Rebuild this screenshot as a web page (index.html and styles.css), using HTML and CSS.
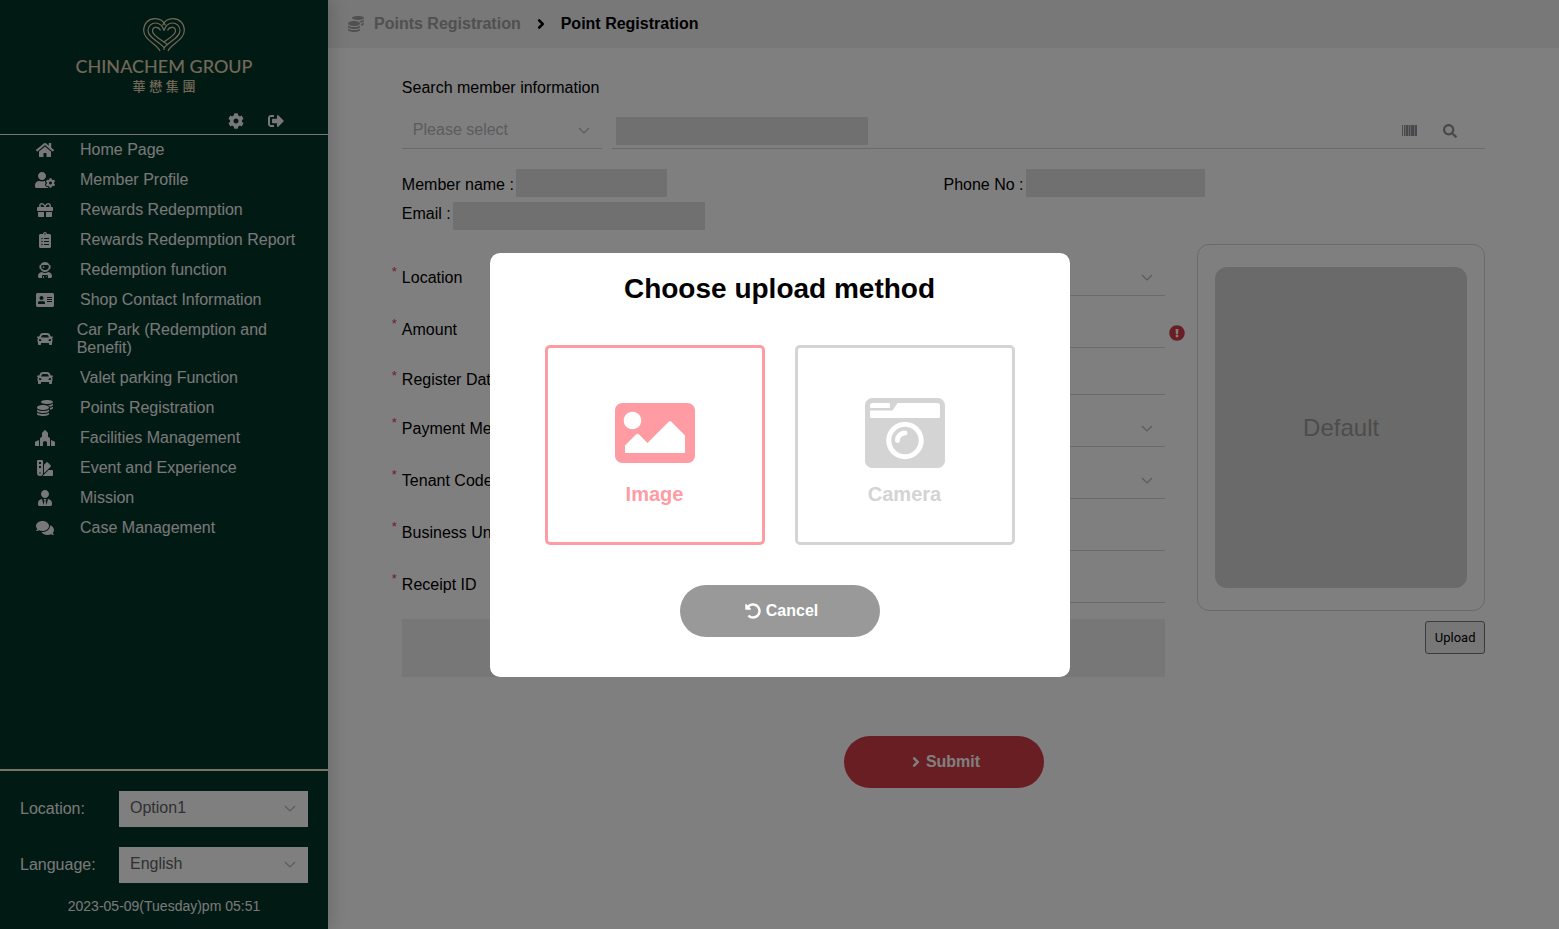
FILE: index.html
```html
<!DOCTYPE html>
<html lang="en">
<head>
<meta charset="utf-8">
<title>Point Registration</title>
<link rel="stylesheet" href="styles.css">
</head>
<body>
<svg class="defs" aria-hidden="true">
  <symbol id="coins" viewBox="0 0 512 512"><path d="M0 405.3V448c0 35.3 86 64 192 64s192-28.7 192-64v-42.7C342.7 434.4 267.2 448 192 448S41.3 434.4 0 405.3zM320 128c106 0 192-28.7 192-64S426 0 320 0 128 28.7 128 64s86 64 192 64zM0 300.4V352c0 35.3 86 64 192 64s192-28.7 192-64v-51.6c-41.3 34-116.9 51.6-192 51.6S41.3 334.4 0 300.4zm416 11c57.3-11.1 96-31.7 96-55.4v-42.7c-23.2 16.4-57.3 27.6-96 34.5v63.6zM192 160C86 160 0 195.8 0 240s86 80 192 80 192-35.8 192-80-86-80-192-80zm219.3 56.3c60-10.8 100.7-32 100.7-56.3v-42.7c-35.5 25.1-96.5 38.6-160.7 41.8 29.5 14.3 51.2 33.5 60 57.2z"/></symbol>
  <symbol id="car" viewBox="0 0 512 512"><path d="M499.99 176h-59.87l-16.64-41.6C406.38 91.63 365.57 64 319.5 64h-127c-46.06 0-86.88 27.63-103.99 70.4L71.87 176H12.01C4.2 176-1.53 183.34.37 190.91l6 24C7.7 220.25 12.5 224 18.01 224h20.07C24.65 235.73 16 252.78 16 272v48c0 16.12 6.16 30.67 16 41.93V416c0 17.67 14.33 32 32 32h32c17.67 0 32-14.33 32-32v-32h256v32c0 17.67 14.33 32 32 32h32c17.67 0 32-14.33 32-32v-54.07c9.84-11.25 16-25.8 16-41.93v-48c0-19.22-8.65-36.27-22.07-48H494c5.51 0 10.31-3.75 11.64-9.09l6-24c1.89-7.57-3.84-14.91-11.65-14.91zm-352.06-17.83c7.29-18.22 24.94-30.17 44.57-30.17h127c19.63 0 37.28 11.95 44.57 30.17L384 208H128l19.93-49.83zM96 319.8c-19.2 0-32-12.76-32-31.9S76.8 256 96 256s48 28.71 48 47.85-28.8 15.95-48 15.95zm320 0c-19.2 0-48 3.19-48-15.95S396.8 256 416 256s32 12.76 32 31.9-12.8 31.9-32 31.9z"/></symbol>
  <symbol id="angle" viewBox="0 0 256 512"><path d="M224.3 273l-136 136c-9.4 9.4-24.6 9.4-33.9 0l-22.6-22.6c-9.4-9.4-9.4-24.6 0-33.9l96.4-96.4-96.4-96.4c-9.4-9.4-9.4-24.6 0-33.9L54.3 103c9.4-9.4 24.6-9.4 33.9 0l136 136c9.5 9.4 9.5 24.6.1 34z"/></symbol>
  <symbol id="chevron" viewBox="0 0 14 14"><path d="M2 4l5 5 5-5" fill="none" stroke="currentColor" stroke-width="1.1"/></symbol>
</svg>

<div class="layout">
  <aside class="sidebar">
    <header class="brand">
      <svg class="brand-mark" viewBox="0 0 42 34" aria-hidden="true">
        <g fill="none" stroke="currentColor" stroke-width="1.2">
          <path d="M17 33C14 26 .7 22 .7 12.500C.7 5 6 .7 12 .7C17 .7 20.500 3 22.500 7.500"/>
          <path d="M25 33C28 26 41.300 22 41.300 12.500C41.300 5 36 .7 30 .7C25 .7 21.500 3 19.500 7.500"/>
          <path d="M21 32V29.500C17 24 5 20 5 12.500C5 8 8.500 5 12.500 5C17 5 19.500 8 21 12.500"/>
          <path d="M21 30C25 24 37 20 37 12.500C37 8 33.500 5 29.500 5C25 5 22.500 8 21 12.500"/>
          <path d="M25 27C18 21 9.500 18 9.500 13C9.500 8.500 15.500 8 17.500 12.500"/>
          <path d="M21 24C26 20 32.500 17 32.500 13C32.500 8.500 26.500 8 24.500 12.500"/>
        </g>
      </svg>
      <p class="brand-name">CHINACHEM GROUP</p>
      <p class="brand-cjk" lang="zh-Hant">華 懋 集 團</p>
      <div class="brand-tools">
        <button class="icon-button" aria-label="Settings"><svg class="icon" viewBox="0 0 512 512"><path d="M487.4 315.7l-42.6-24.6c4.300-23.200 4.300-47 0-70.200l42.600-24.600c4.900-2.800 7.100-8.600 5.500-14-11.100-35.600-30-67.800-54.700-94.600-3.800-4.100-10-5.100-14.800-2.300L380.800 110c-17.900-15.400-38.500-27.300-60.800-35.100V25.800c0-5.600-3.900-10.500-9.400-11.700-36.700-8.200-74.300-7.800-109.200 0-5.500 1.200-9.400 6.100-9.400 11.700V75c-22.200 7.900-42.800 19.800-60.800 35.100L88.700 85.500c-4.900-2.800-11-1.900-14.800 2.300-24.700 26.700-43.600 58.900-54.700 94.600-1.700 5.400.6 11.200 5.500 14L67.300 221c-4.300 23.200-4.300 47 0 70.200l-42.600 24.600c-4.900 2.800-7.100 8.600-5.500 14 11.100 35.600 30 67.800 54.700 94.600 3.800 4.100 10 5.100 14.800 2.300l42.600-24.600c17.900 15.400 38.500 27.300 60.800 35.100v49.200c0 5.600 3.900 10.500 9.400 11.700 36.700 8.200 74.300 7.800 109.200 0 5.500-1.200 9.400-6.100 9.400-11.700v-49.200c22.200-7.900 42.800-19.800 60.800-35.100l42.600 24.600c4.900 2.800 11 1.900 14.800-2.300 24.700-26.700 43.600-58.900 54.700-94.600 1.500-5.500-.7-11.300-5.600-14.100zM256 336c-44.100 0-80-35.900-80-80s35.900-80 80-80 80 35.900 80 80-35.900 80-80 80z"/></svg></button>
        <button class="icon-button" aria-label="Sign out"><svg class="icon" viewBox="0 0 512 512"><path d="M497 273L329 441c-15 15-41 4.500-41-17v-96H152c-13.300 0-24-10.700-24-24v-96c0-13.300 10.700-24 24-24h136V88c0-21.400 25.900-32 41-17l168 168c9.300 9.400 9.300 24.600 0 34zM192 436v-40c0-6.600-5.400-12-12-12H96c-17.700 0-32-14.300-32-32V160c0-17.700 14.300-32 32-32h84c6.600 0 12-5.400 12-12V76c0-6.600-5.400-12-12-12H96c-53 0-96 43-96 96v192c0 53 43 96 96 96h84c6.600 0 12-5.400 12-12z"/></svg></button>
      </div>
    </header>

    <nav class="menu">
      <a class="menu-item" href="#"><span class="menu-icon"><svg class="icon" viewBox="0 0 576 512"><path d="M280.37 148.26L96 300.11V464a16 16 0 0 0 16 16l112.06-.29a16 16 0 0 0 15.92-16V368a16 16 0 0 1 16-16h64a16 16 0 0 1 16 16v95.64a16 16 0 0 0 16 16.05L464 480a16 16 0 0 0 16-16V300L295.67 148.26a12.19 12.19 0 0 0-15.3 0zM571.6 251.47L488 182.56V44.05a12 12 0 0 0-12-12h-56a12 12 0 0 0-12 12v72.61L318.47 43a48 48 0 0 0-61 0L4.34 251.47a12 12 0 0 0-1.6 16.9l25.5 31A12 12 0 0 0 45.15 301l235.22-193.74a12.19 12.19 0 0 1 15.3 0L530.9 301a12 12 0 0 0 16.9-1.6l25.5-31a12 12 0 0 0-1.7-16.93z"/></svg></span><span>Home Page</span></a>
      <a class="menu-item" href="#"><span class="menu-icon"><svg class="icon" viewBox="0 0 640 512"><path d="M610.5 373.3c2.600-14.100 2.600-28.500 0-42.600l25.800-14.900c3-1.700 4.300-5.200 3.300-8.500-6.700-21.600-18.200-41.200-33.200-57.400-2.300-2.500-6-3.100-9-1.400l-25.800 14.900c-10.900-9.300-23.400-16.500-36.900-21.300v-29.800c0-3.400-2.400-6.400-5.700-7.100-22.300-5-45-4.800-66.200 0-3.300.7-5.700 3.700-5.700 7.100v29.800c-13.500 4.800-26 12-36.900 21.300l-25.800-14.900c-2.900-1.700-6.700-1.100-9 1.400-15 16.200-26.500 35.800-33.200 57.400-1 3.300.4 6.800 3.300 8.500l25.800 14.900c-2.600 14.100-2.600 28.500 0 42.600l-25.800 14.900c-3 1.700-4.300 5.200-3.300 8.500 6.700 21.600 18.200 41.100 33.200 57.400 2.300 2.500 6 3.100 9 1.400l25.800-14.900c10.900 9.300 23.400 16.500 36.900 21.300v29.800c0 3.400 2.400 6.400 5.700 7.100 22.300 5 45 4.800 66.200 0 3.300-.7 5.700-3.700 5.700-7.100v-29.800c13.500-4.800 26-12 36.900-21.300l25.800 14.900c2.900 1.700 6.700 1.100 9-1.400 15-16.200 26.500-35.800 33.200-57.400 1-3.300-.4-6.800-3.300-8.500l-25.800-14.900zM496 400.500c-26.800 0-48.500-21.800-48.500-48.500s21.800-48.500 48.500-48.500 48.500 21.800 48.500 48.500-21.700 48.500-48.500 48.500zM224 256c70.700 0 128-57.300 128-128S294.700 0 224 0 96 57.300 96 128s57.300 128 128 128zm201.200 226.500c-2.300-1.200-4.600-2.600-6.800-3.900l-7.900 4.600c-6 3.400-12.800 5.300-19.600 5.300-10.900 0-21.400-4.600-28.900-12.600-18.300-19.800-32.300-43.900-40.200-69.600-5.500-17.700 1.900-36.400 17.900-45.700l7.900-4.600c-.1-2.600-.1-5.200 0-7.800l-7.900-4.600c-16-9.200-23.400-28-17.900-45.700.9-2.900 2.200-5.800 3.200-8.700-3.800-.3-7.500-1.200-11.400-1.200h-16.700c-22.200 10.200-46.900 16-72.900 16s-50.600-5.800-72.900-16h-16.700C60.200 288 0 348.200 0 422.400V464c0 26.500 21.500 48 48 48h352c10.100 0 19.500-3.200 27.200-8.500-1.200-3.800-2-7.700-2-11.800v-9.200z"/></svg></span><span>Member Profile</span></a>
      <a class="menu-item" href="#"><span class="menu-icon"><svg class="icon" viewBox="0 0 512 512"><path d="M32 448c0 17.700 14.300 32 32 32h160V320H32v128zm256 32h160c17.700 0 32-14.300 32-32V320H288v160zm192-320h-42.100c6.200-12.100 10.100-25.500 10.100-40 0-48.500-39.500-88-88-88-41.600 0-68.500 21.300-103 68.300-34.500-47-61.400-68.300-103-68.300-48.500 0-88 39.500-88 88 0 14.500 3.800 27.900 10.100 40H32c-17.700 0-32 14.300-32 32v80c0 8.800 7.200 16 16 16h480c8.800 0 16-7.200 16-16v-80c0-17.700-14.300-32-32-32zm-326.100 0c-22.100 0-40-17.900-40-40s17.900-40 40-40c19.900 0 34.600 3.300 86.100 80h-86.100zm206.100 0h-86.100c51.400-76.500 65.700-80 86.100-80 22.100 0 40 17.900 40 40s-17.900 40-40 40z"/></svg></span><span>Rewards Redepmption</span></a>
      <a class="menu-item" href="#"><span class="menu-icon"><svg class="icon" viewBox="0 0 384 512"><path d="M336 64h-80c0-35.300-28.700-64-64-64s-64 28.700-64 64H48C21.500 64 0 85.500 0 112v352c0 26.500 21.500 48 48 48h288c26.500 0 48-21.500 48-48V112c0-26.500-21.500-48-48-48zM96 424c-13.300 0-24-10.700-24-24s10.700-24 24-24 24 10.700 24 24-10.700 24-24 24zm0-96c-13.300 0-24-10.700-24-24s10.700-24 24-24 24 10.700 24 24-10.700 24-24 24zm0-96c-13.300 0-24-10.700-24-24s10.700-24 24-24 24 10.700 24 24-10.700 24-24 24zm96-192c13.300 0 24 10.700 24 24s-10.700 24-24 24-24-10.700-24-24 10.700-24 24-24zm128 368c0 4.400-3.600 8-8 8H168c-4.400 0-8-3.600-8-8v-16c0-4.400 3.600-8 8-8h144c4.400 0 8 3.600 8 8v16zm0-96c0 4.400-3.600 8-8 8H168c-4.400 0-8-3.600-8-8v-16c0-4.400 3.600-8 8-8h144c4.400 0 8 3.600 8 8v16zm0-96c0 4.400-3.600 8-8 8H168c-4.400 0-8-3.600-8-8v-16c0-4.400 3.600-8 8-8h144c4.400 0 8 3.600 8 8v16z"/></svg></span><span>Rewards Redepmption Report</span></a>
      <a class="menu-item" href="#"><span class="menu-icon"><svg class="icon" viewBox="0 0 448 512"><path d="M64 224h13.500c24.700 56.500 80.900 96 146.500 96s121.800-39.500 146.500-96H384c8.800 0 16-7.200 16-16v-96c0-8.800-7.200-16-16-16h-13.500C345.800 39.500 289.600 0 224 0S102.200 39.500 77.500 96H64c-8.800 0-16 7.200-16 16v96c0 8.800 7.200 16 16 16zm40-88c0-22.100 21.500-40 48-40h144c26.500 0 48 17.900 48 40v24c0 53-43 96-96 96h-48c-53 0-96-43-96-96v-24zm72 72l12-36 36-12-36-12-12-36-12 36-36 12 36 12 12 36zm151.600 113.400C297.700 340.700 262.200 352 224 352s-73.700-11.300-103.600-30.600C52.900 328.500 0 385 0 454.400v9.600c0 26.500 21.500 48 48 48h80v-64c0-17.700 14.300-32 32-32h128c17.700 0 32 14.300 32 32v64h80c26.500 0 48-21.500 48-48v-9.600c0-69.400-52.900-125.900-120.400-133zM272 448c-8.800 0-16 7.200-16 16s7.200 16 16 16 16-7.200 16-16-7.200-16-16-16zm-96 0c-8.800 0-16 7.200-16 16v48h32v-48c0-8.800-7.200-16-16-16z"/></svg></span><span>Redemption function</span></a>
      <a class="menu-item" href="#"><span class="menu-icon"><svg class="icon" viewBox="0 0 576 512"><path d="M528 32H48C21.500 32 0 53.500 0 80v352c0 26.500 21.500 48 48 48h480c26.500 0 48-21.500 48-48V80c0-26.500-21.500-48-48-48zm-352 96c35.300 0 64 28.700 64 64s-28.700 64-64 64-64-28.700-64-64 28.700-64 64-64zm112 236.800c0 10.600-10 19.200-22.400 19.200H86.400C74 384 64 375.400 64 364.800v-19.200c0-31.800 30.100-57.600 67.200-57.600h5c12.300 5.100 25.700 8 39.800 8s27.600-2.900 39.800-8h5c37.100 0 67.200 25.800 67.200 57.600v19.200zM512 312c0 4.400-3.600 8-8 8H360c-4.400 0-8-3.600-8-8v-16c0-4.400 3.600-8 8-8h144c4.400 0 8 3.600 8 8v16zm0-64c0 4.400-3.600 8-8 8H360c-4.400 0-8-3.600-8-8v-16c0-4.400 3.600-8 8-8h144c4.400 0 8 3.600 8 8v16zm0-64c0 4.400-3.600 8-8 8H360c-4.400 0-8-3.600-8-8v-16c0-4.400 3.600-8 8-8h144c4.400 0 8 3.600 8 8v16z"/></svg></span><span>Shop Contact Information</span></a>
      <a class="menu-item" href="#"><span class="menu-icon"><svg class="icon"><use href="#car"/></svg></span><span>Car Park (Redemption and Benefit)</span></a>
      <a class="menu-item" href="#"><span class="menu-icon"><svg class="icon"><use href="#car"/></svg></span><span>Valet parking Function</span></a>
      <a class="menu-item" href="#"><span class="menu-icon"><svg class="icon"><use href="#coins"/></svg></span><span>Points Registration</span></a>
      <a class="menu-item" href="#"><span class="menu-icon"><svg class="icon" viewBox="0 0 640 512"><path d="M620.610 366.550L512 320v192h112c8.840 0 16-7.160 16-16V395.960a32 32 0 0 0-19.390-29.410zM0 395.960V496c0 8.840 7.160 16 16 16h112V320L19.390 366.550A32 32 0 0 0 0 395.960zm464.460-149.280L416 217.600V102.630c0-8.490-3.370-16.620-9.380-22.630L331.310 4.690c-6.250-6.250-16.380-6.250-22.620 0L233.380 80c-6 6-9.380 14.140-9.380 22.630V217.600l-48.460 29.080A31.997 31.997 0 0 0 160 274.120V512h96v-96c0-35.350 28.660-64 64-64s64 28.650 64 64v96h96V274.120c0-11.240-5.900-21.660-15.540-27.440z"/></svg></span><span>Facilities Management</span></a>
      <a class="menu-item" href="#"><span class="menu-icon"><svg class="icon" viewBox="0 0 512 512"><path d="M434.66 167.71L344.5 77.36a31.83 31.83 0 0 0-45-.07l-.07.07L224 152.88V424L434.66 212.9a32 32 0 0 0 0-45.19zM480 320H373.09L186.68 506.51c-2.06 2.07-4.5 3.58-6.68 5.49H480a32 32 0 0 0 32-32V352a32 32 0 0 0-32-32zM192 32a32 32 0 0 0-32-32H32A32 32 0 0 0 0 32v384a96 96 0 0 0 192 0zM96 440a24 24 0 1 1 24-24 24 24 0 0 1-24 24zm32-184H64v-64h64zm0-128H64V64h64z"/></svg></span><span>Event and Experience</span></a>
      <a class="menu-item" href="#"><span class="menu-icon"><svg class="icon" viewBox="0 0 448 512"><path d="M224 256c70.700 0 128-57.300 128-128S294.700 0 224 0 96 57.300 96 128s57.300 128 128 128zm95.800 32.600L272 480l-32-136 32-56h-96l32 56-32 136-47.800-191.400C56.900 292 0 350.300 0 422.400V464c0 26.500 21.500 48 48 48h352c26.500 0 48-21.500 48-48v-41.600c0-72.100-56.900-130.400-128.200-133.800z"/></svg></span><span>Mission</span></a>
      <a class="menu-item" href="#"><span class="menu-icon"><svg class="icon" viewBox="0 0 576 512"><path d="M416 192c0-88.400-93.100-160-208-160S0 103.600 0 192c0 34.300 14.100 65.900 38 92-13.400 30.200-35.500 54.200-35.800 54.500-2.200 2.300-2.800 5.700-1.500 8.700S4.800 352 8 352c36.600 0 66.900-12.300 88.700-25 32.200 15.700 70.300 25 111.300 25 114.900 0 208-71.600 208-160zm122 220c23.900-26 38-57.700 38-92 0-66.900-53.500-124.200-129.300-148.100.9 6.600 1.300 13.300 1.300 20.100 0 105.900-107.700 192-240 192-10.800 0-21.300-.8-31.700-1.900C207.800 439.600 281.800 480 368 480c41 0 79.100-9.200 111.300-25 21.800 12.700 52.100 25 88.700 25 3.200 0 6.100-1.900 7.300-4.800 1.300-2.900.7-6.300-1.500-8.700-.3-.3-22.400-24.200-35.800-54.500z"/></svg></span><span>Case Management</span></a>
    </nav>

    <footer class="preferences">
      <div class="preference">
        <label for="site">Location:</label>
        <span class="picker picker-filled"><select id="site"><option>Option1</option></select><svg class="chevron"><use href="#chevron"/></svg></span>
      </div>
      <div class="preference">
        <label for="language">Language:</label>
        <span class="picker picker-filled"><select id="language"><option>English</option></select><svg class="chevron"><use href="#chevron"/></svg></span>
      </div>
      <p class="clock">2023-05-09(Tuesday)pm 05:51</p>
    </footer>
  </aside>

  <main class="page">
    <nav class="breadcrumb">
      <a class="crumb" href="#"><svg class="icon"><use href="#coins"/></svg>Points Registration</a>
      <svg class="icon angle"><use href="#angle"/></svg>
      <span>Point Registration</span>
    </nav>

    <div class="content">
      <label class="search-label" for="search-type">Search member information</label>
      <div class="search">
        <span class="picker search-type"><select class="placeholder" id="search-type"><option>Please select</option></select><svg class="chevron"><use href="#chevron"/></svg></span>
        <div class="search-box">
          <input class="search-input" type="text" aria-label="Search value">
          <button class="icon-button" aria-label="Scan barcode"><svg class="icon" viewBox="0 0 16 16" shape-rendering="crispEdges"><path d="M0 2h1v11H0zM2 2h1v11H2zM4 2h2v11H4zM7 2h1v11H7zM9 2h3v11H9zM13 2h2v11h-2z"/><path d="M3 2h1v11H3zM6 2h1v11H6zM8 2h1v11H8zM12 2h1v11h-1z" opacity=".5"/></svg></button>
          <button class="icon-button" aria-label="Search"><svg class="icon icon-search" viewBox="0 0 512 512"><path d="M505 442.700L405.300 343c-4.500-4.500-10.600-7-17-7H372c27.600-35.300 44-79.700 44-128C416 93.100 322.900 0 208 0S0 93.100 0 208s93.100 208 208 208c48.300 0 92.700-16.400 128-44v16.300c0 6.400 2.500 12.500 7 17l99.700 99.700c9.400 9.400 24.600 9.400 33.900 0l28.300-28.300c9.400-9.400 9.400-24.600.1-34zM208 336c-70.700 0-128-57.200-128-128 0-70.700 57.200-128 128-128 70.700 0 128 57.200 128 128 0 70.700-57.200 128-128 128z"/></svg></button>
        </div>
      </div>

      <div class="member">
        <div class="member-field">Member name :<span class="mask mask-name"></span></div>
        <div class="member-field">Phone No :<span class="mask mask-phone"></span></div>
        <div class="member-field member-email">Email :<span class="mask mask-email"></span></div>
      </div>

      <div class="registration">
        <form class="fields">
          <div class="field"><span class="required">*</span><label for="location">Location</label><span class="picker"><select id="location"><option></option></select><svg class="chevron"><use href="#chevron"/></svg></span></div>
          <div class="field"><span class="required">*</span><label for="amount">Amount</label><input id="amount" type="text"><svg class="icon alert" viewBox="0 0 512 512"><path d="M504 256c0 136.997-111.043 248-248 248S8 392.997 8 256C8 119.083 119.043 8 256 8s248 111.083 248 248zm-248 50c-25.405 0-46 20.595-46 46s20.595 46 46 46 46-20.595 46-46-20.595-46-46-46zm-43.673-165.346l7.418 136c.347 6.364 5.609 11.346 11.982 11.346h48.546c6.373 0 11.635-4.982 11.982-11.346l7.418-136c.375-6.874-5.098-12.654-11.982-12.654h-63.383c-6.884 0-12.356 5.780-11.981 12.654z"/></svg></div>
          <div class="field field-date"><span class="required">*</span><label for="date">Register Date</label><input id="date" type="text"></div>
          <div class="field"><span class="required">*</span><label for="payment">Payment Method</label><span class="picker"><select id="payment"><option></option></select><svg class="chevron"><use href="#chevron"/></svg></span></div>
          <div class="field"><span class="required">*</span><label for="tenant">Tenant Code</label><span class="picker"><select id="tenant"><option></option></select><svg class="chevron"><use href="#chevron"/></svg></span></div>
          <div class="field"><span class="required">*</span><label for="unit">Business Unit</label><input id="unit" type="text"></div>
          <div class="field"><span class="required">*</span><label for="receipt">Receipt ID</label><input id="receipt" type="text"></div>
        </form>
        <section class="receipt">
          <div class="receipt-frame"><div class="receipt-preview">Default</div></div>
          <button class="upload">Upload</button>
        </section>
      </div>

      <button class="pill submit"><svg class="icon angle"><use href="#angle"/></svg>Submit</button>
    </div>
  </main>
</div>

<div class="backdrop">
  <section class="modal" role="dialog" aria-modal="true" aria-labelledby="modal-title">
    <h2 class="modal-title" id="modal-title">Choose upload method</h2>
    <div class="choices">
      <button class="choice choice-active"><svg viewBox="0 0 512 512"><path d="M464 448H48c-26.510 0-48-21.490-48-48V112c0-26.510 21.490-48 48-48h416c26.510 0 48 21.490 48 48v288c0 26.510-21.490 48-48 48zM112 120c-30.928 0-56 25.072-56 56s25.072 56 56 56 56-25.072 56-56-25.072-56-56-56zM64 384h384V272l-87.515-87.515c-4.686-4.686-12.284-4.686-16.971 0L208 320l-55.515-55.515c-4.686-4.686-12.284-4.686-16.971 0L64 336v48z"/></svg>Image</button>
      <button class="choice"><svg viewBox="0 0 512 512"><path d="M48 32C21.500 32 0 53.500 0 80v352c0 26.500 21.500 48 48 48h416c26.500 0 48-21.500 48-48V80c0-26.500-21.500-48-48-48H48zm0 32h106c3.300 0 6 2.700 6 6v20c0 3.300-2.700 6-6 6H38c-3.300 0-6-2.700-6-6V80c0-8.800 7.200-16 16-16zm426 96H38c-3.300 0-6-2.700-6-6v-36c0-3.300 2.700-6 6-6h138l30.200-45.300c1.100-1.700 3-2.700 5-2.700H464c8.800 0 16 7.200 16 16v74c0 3.300-2.700 6-6 6zM256 424c-66.200 0-120-53.800-120-120s53.800-120 120-120 120 53.800 120 120-53.800 120-120 120zm0-208c-48.500 0-88 39.500-88 88s39.500 88 88 88 88-39.500 88-88-39.500-88-88-88zm-48 104c-8.800 0-16-7.200-16-16 0-35.300 28.700-64 64-64 8.800 0 16 7.200 16 16s-7.200 16-16 16c-17.600 0-32 14.400-32 32 0 8.800-7.200 16-16 16z"/></svg>Camera</button>
    </div>
    <button class="pill cancel"><svg class="icon" viewBox="0 0 512 512"><path d="M255.545 8c-66.269.119-126.438 26.233-170.860 68.685L48.971 40.971C33.851 25.851 8 36.559 8 57.941V192c0 13.255 10.745 24 24 24h134.059c21.382 0 32.090-25.851 16.971-40.971l-41.750-41.750c30.864-28.899 70.801-44.907 113.230-45.273 92.398-.798 170.283 73.977 169.484 169.442C423.236 348.009 349.816 424 256 424c-41.127 0-79.997-14.678-110.630-41.556-4.743-4.161-11.906-3.908-16.368.553L89.340 422.659c-4.872 4.872-4.631 12.815.482 17.433C133.798 479.813 192.074 504 256 504c136.966 0 247.999-111.033 248-247.998C504.001 119.193 392.354 7.755 255.545 8z"/></svg>Cancel</button>
  </section>
</div>
</body>
</html>
```
FILE: styles.css
```css
* {
  box-sizing: border-box;
}

body {
  margin: 0;
  font: 16px/18px "Liberation Sans", Arial, sans-serif;
  color: #000;
  background: #fff;
}

p,
h2 {
  margin: 0;
}

a {
  color: inherit;
  text-decoration: none;
}

button,
input,
select {
  font: inherit;
  color: inherit;
  border: 0;
  border-radius: 0;
  padding: 0;
  margin: 0;
  background: none;
  outline: 0;
}

svg {
  fill: currentColor;
  flex: none;
}

.defs {
  display: none;
}

.icon {
  display: block;
  width: auto;
  min-width: 16px;
  height: 16px;
}

.icon:not([viewBox]) {
  width: 16px;
}

.icon.angle {
  width: 8px;
  min-width: 8px;
}

.icon-button {
  display: flex;
}

.layout {
  display: flex;
  min-height: 100vh;
}

/* Sidebar */

.sidebar {
  position: relative;
  display: flex;
  flex: none;
  flex-direction: column;
  width: 328px;
  color: #f0f0f0;
  background: #043428;
  box-shadow: 4px 0 16px rgba(0, 0, 0, 0.16);
}

.brand {
  display: flex;
  flex-direction: column;
  align-items: center;
  padding-top: 18px;
  border-bottom: 1px solid #f0ece0;
}

.brand-mark {
  width: 42px;
  height: 34px;
  color: #e0d2b0;
}

.brand-name {
  margin-top: 2px;
  font: 500 18px/24px Lato, sans-serif;
  color: #e0d2b0;
}

.brand-cjk {
  font: 500 13px/18px "Liberation Sans", "Noto Sans CJK TC", sans-serif;
  color: #e0d2b0;
}

.brand-tools {
  display: flex;
  gap: 24px;
  align-self: flex-end;
  padding: 17px 44px 5px 0;
}

.menu {
  flex: 1;
}

.menu-item {
  display: flex;
  align-items: center;
  padding: 6px 20px 6px 35px;
}

.menu-icon {
  display: flex;
  width: 45px;
}

.menu-icon .icon {
  width: 20px;
}

.preferences {
  display: flex;
  flex-direction: column;
  gap: 20px;
  padding: 20px 20px 15px;
  border-top: 2px solid #f0e6cc;
}

.preference {
  display: flex;
  align-items: center;
  justify-content: space-between;
}

.preference .picker {
  width: 189px;
}

.clock {
  margin-top: -5px;
  font-size: 14px;
  line-height: 16px;
  text-align: center;
}

/* Drop-downs */

.picker {
  display: grid;
  align-items: center;
  height: 36px;
  border-bottom: 1px solid #d4d4d4;
}

.picker select {
  grid-area: 1 / 1;
  width: 100%;
  height: 100%;
  padding: 0 34px 1px 11px;
  appearance: none;
}

.picker .placeholder {
  color: #b4b8c0;
}

.picker-filled {
  color: #606266;
  background: #fff;
  border-bottom-color: #fff;
}

.chevron {
  grid-area: 1 / 1;
  justify-self: end;
  width: 14px;
  height: 14px;
  margin-right: 11px;
  color: #b0b3ba;
  pointer-events: none;
}

/* Page */

.page {
  flex: 1;
  min-width: 0;
}

.breadcrumb {
  display: flex;
  gap: 16px;
  align-items: center;
  height: 48px;
  padding-left: 20px;
  font-weight: bold;
  background: #f0f0f0;
}

.crumb {
  display: flex;
  gap: 10px;
  align-items: center;
  color: #a0a0a0;
}

.content {
  display: flex;
  flex-direction: column;
  padding: 31px 6% 0;
}

.search-label {
  margin-bottom: 16px;
}

.search {
  display: flex;
  gap: 10px;
}

.search-type {
  width: 200px;
}

.search-box {
  display: flex;
  flex: 1;
  gap: 24px;
  align-items: center;
  padding: 4px 27px 3px 4px;
  color: #909399;
  border-bottom: 1px solid #d4d4d4;
}

.search-input {
  width: 252px;
  height: 28px;
  margin-right: auto;
  background: #e0e0e0;
}

.icon-search {
  width: 14px;
  height: 14px;
}

.member {
  display: grid;
  grid-template-columns: 1fr 1fr;
  gap: 5px 0;
  margin-top: 20px;
}

.member-field {
  display: flex;
  gap: 2px;
  align-items: flex-end;
  line-height: 24px;
}

.member-email {
  align-items: flex-start;
}

.mask {
  height: 28px;
  background: #e0e0e0;
}

.mask-name {
  width: 151px;
}

.mask-phone {
  width: 179px;
}

.mask-email {
  width: 252px;
}

.registration {
  display: flex;
  gap: 32px;
  align-items: flex-start;
  margin-top: 14px;
}

.fields {
  display: flex;
  flex: 1;
  flex-direction: column;
  gap: 16px;
  padding-top: 16px;
}

.fields::after {
  content: "";
  height: 58px;
  background: #eee;
}

.field {
  position: relative;
  display: grid;
  grid-template-columns: 10px 190px 1fr;
  align-items: center;
  height: 36px;
  margin-left: -10px;
}

.field-date {
  height: 31px;
}

.field .picker,
.field input {
  height: 100%;
  border-bottom: 1px solid #d4d4d4;
}

.required {
  align-self: start;
  padding-top: 4px;
  font-size: 13px;
  line-height: 16px;
  color: #d8404a;
}

.alert {
  position: absolute;
  top: 13px;
  right: -20px;
  color: #d23c46;
}

.receipt {
  display: flex;
  flex-direction: column;
  gap: 10px;
  align-items: flex-end;
  width: 288px;
}

.receipt-frame {
  width: 100%;
  padding: 22px 17px;
  border: 1px solid #d4d4d4;
  border-radius: 12px;
}

.receipt-preview {
  display: grid;
  place-items: center;
  height: 321px;
  font-size: 24px;
  color: #999;
  background: #d4d4d4;
  border-radius: 12px;
}

.upload {
  width: 60px;
  font: 13px/31px Roboto, sans-serif;
  background: #efefef;
  border: 1px solid #767676;
  border-radius: 3px;
}

.pill {
  display: flex;
  gap: 5px;
  align-items: center;
  justify-content: center;
  width: 200px;
  height: 52px;
  padding-left: 4px;
  font-weight: bold;
  color: #fff;
  border-radius: 26px;
}

.pill .angle {
  width: 10px;
}

.submit {
  align-self: center;
  margin-top: 59px;
  background: #d23c46;
}

/* Upload dialog */

.backdrop {
  position: fixed;
  inset: 0;
  display: grid;
  place-items: center;
  background: rgba(0, 0, 0, 0.5);
}

.modal {
  display: flex;
  flex-direction: column;
  align-items: center;
  padding: 20px 55px 40px;
  background: #fff;
  border-radius: 10px;
}

.modal-title {
  font-size: 28px;
  line-height: 32px;
}

.choices {
  display: flex;
  gap: 30px;
  margin: 40px 0;
}

.choice {
  display: flex;
  flex-direction: column;
  gap: 10px;
  align-items: center;
  width: 220px;
  height: 200px;
  padding-top: 45px;
  font-size: 20px;
  font-weight: bold;
  line-height: 23px;
  color: #d4d4d4;
  border: 3px solid;
  border-radius: 5px;
}

.choice svg {
  width: 80px;
  height: 80px;
}

.choice-active {
  color: #ff9ca3;
}

.cancel {
  background: #999;
}
```
